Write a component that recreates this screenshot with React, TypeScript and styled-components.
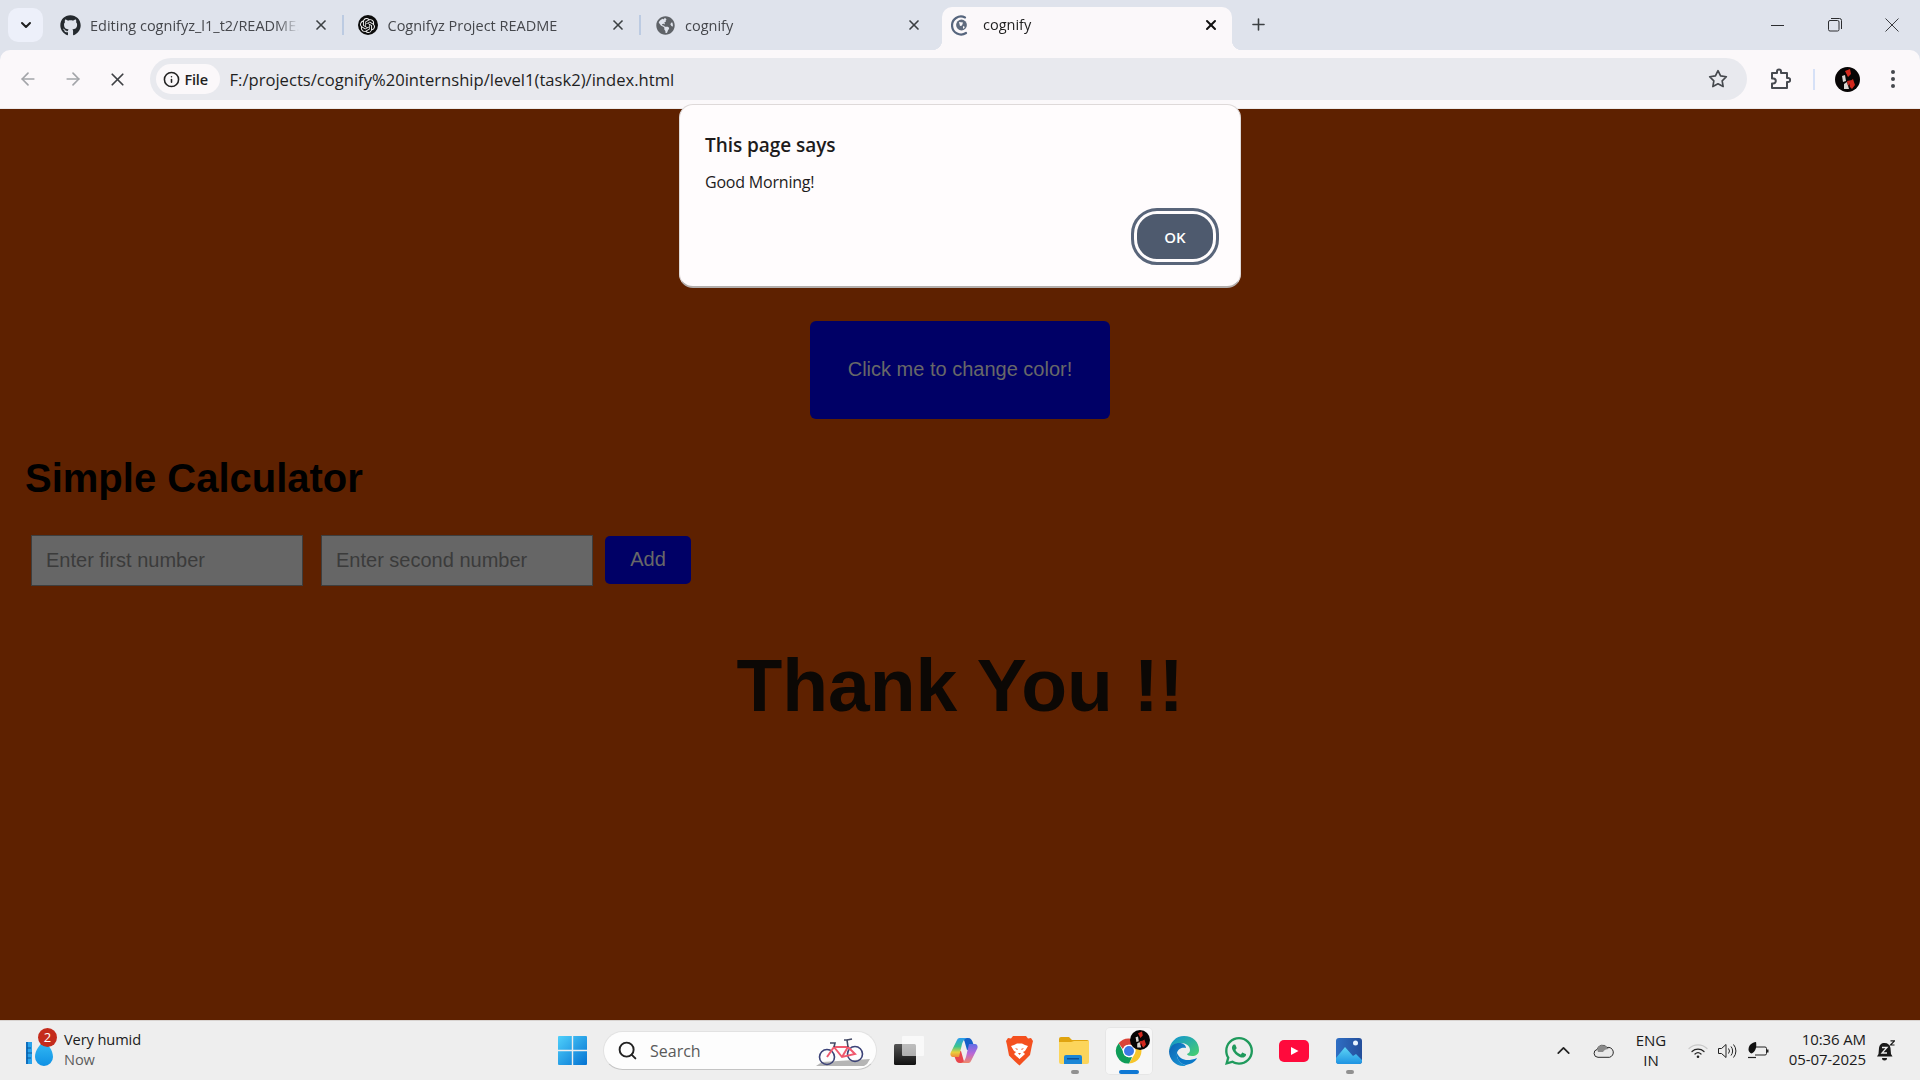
import styled, { createGlobalStyle } from "styled-components";
import { FaGithub, FaGlobeAmericas, FaWhatsapp } from "react-icons/fa";
import { SiOpenai } from "react-icons/si";
import { FiArrowLeft, FiArrowRight, FiX, FiPlus, FiStar, FiSearch, FiChevronUp, FiChevronDown, FiInfo } from "react-icons/fi";

const GlobalStyle = createGlobalStyle`
  html, body { margin: 0; padding: 0; }
  body { width: 1920px; height: 1080px; overflow: hidden; font-family: "Open Sans", "Noto Sans", sans-serif; }
`;

const Avatar = ({ size }: { size: number }) => (
  <svg width={size} height={size} viewBox="0 0 25 25">
    <circle cx="12.5" cy="12.5" r="12.5" fill="#070505" />
    <path d="M10 4l5-2 1 5-3 3zM14 15l4-3 2 6-3 4-2-2z" fill="#d3281d" />
    <path d="M7 9l3-1 1 6-3 1zM9 17l3-2 2 7H9z" fill="#d8d4d0" />
    <path d="M12 14l5-1-4 6z" fill="#c5271f" />
  </svg>
);

const ActiveFavicon = () => (
  <svg width="20" height="22" viewBox="0 0 20 22">
    <path d="M14 3.4A9 9 0 1 0 15 19" fill="none" stroke="#56657d" strokeWidth="2.2" strokeLinecap="round" />
    <circle cx="10.5" cy="11" r="5.4" fill="#5f6b7e" />
    <path d="M8 8l4 .5-1 3-2 .5zM12 12l2 1-2 2z" fill="#fbf8fa" />
  </svg>
);

const ExtensionIcon = () => (
  <svg width="22" height="22" viewBox="0 0 22 22" fill="none" stroke="#474a50" strokeWidth="2" strokeLinejoin="round">
    <path d="M3 5h5V3.5a2 2 0 0 1 4 0V5h6v5h1.2a2 2 0 0 1 0 4H18v6H3v-4.500h1.300a2.500 2.500 0 0 0 0-5H3z" />
  </svg>
);

const RestoreIcon = () => (
  <svg width="14" height="14" viewBox="0 0 14 14" fill="none" stroke="#2c2d30" strokeWidth="1">
    <rect x="0.500" y="2.500" width="10.500" height="10.500" rx="1.500" />
    <path d="M3 .5h8.500a2 2 0 0 1 2 2V11" />
  </svg>
);

const CloseLines = () => (
  <svg width="14" height="14" viewBox="0 0 14 14" stroke="#3b3c40" strokeWidth="1">
    <path d="M.5.5l13 13M13.500.5l-13 13" />
  </svg>
);

const WeatherIcon = () => (
  <svg width="30" height="28" viewBox="0 0 30 28">
    <defs>
      <linearGradient id="drop" x1="0" y1="0" x2="0" y2="1">
        <stop offset="0" stopColor="#37bdf5" />
        <stop offset="1" stopColor="#0f91e4" />
      </linearGradient>
    </defs>
    <rect x="1" y="4" width="6" height="22" fill="#2aa3ec" />
    <rect x="1" y="4" width="2" height="22" fill="#0f6fbe" />
    <path d="M2 10h4M2 15h5M2 20h4" stroke="#0b5a9a" strokeWidth="1" />
    <path d="M19 2c4 5 9 10 9 17a9 9 0 0 1-18 0c0-7 5-12 9-17z" fill="url(#drop)" />
  </svg>
);

const WindowsLogo = () => (
  <svg width="29" height="29" viewBox="0 0 29 29">
    <defs>
      <linearGradient id="win" x1="0" y1="0" x2="1" y2="1">
        <stop offset="0" stopColor="#4fd0fb" />
        <stop offset="1" stopColor="#0372d2" />
      </linearGradient>
    </defs>
    <path d="M1 0h12.800v13.800H0V1a1 1 0 0 1 1-1zM15.200 0H28a1 1 0 0 1 1 1v12.800H15.200zM0 15.200h13.800V29H1a1 1 0 0 1-1-1zM15.200 15.200H29V28a1 1 0 0 1-1 1H15.200z" fill="url(#win)" />
  </svg>
);

const Bike = () => (
  <svg width="56" height="32" viewBox="0 0 56 32">
    <path d="M0 31l6-4 48-3-3 5-3 2z" fill="#b5b5b5" />
    <g fill="none" strokeWidth="1.600">
      <circle cx="11" cy="22" r="7.500" stroke="#3c4378" />
      <circle cx="39" cy="19" r="7.500" stroke="#3c4378" />
      <path d="M11 22l7-10h14l7 7-13 3-8-10M32 12l-6 10" stroke="#f0596e" strokeWidth="2" />
      <path d="M32 12l-1-7h-3M14 8h5l-1 4" stroke="#444a66" />
      <path d="M31 5l5-1" stroke="#444a66" />
    </g>
  </svg>
);

const TaskViewIcon = () => (
  <svg width="30" height="29" viewBox="0 0 30 29">
    <defs>
      <linearGradient id="tv" x1="0" y1="0" x2="0" y2="1">
        <stop offset="0" stopColor="#555" />
        <stop offset="1" stopColor="#111" />
      </linearGradient>
    </defs>
    <rect x="0" y="8" width="22" height="21" rx="1.500" fill="url(#tv)" />
    <rect x="8" y="0" width="22" height="20" rx="1" fill="#fff" fillOpacity=".62" />
  </svg>
);

const CopilotIcon = () => (
  <svg width="28" height="27" viewBox="0 0 28 27">
    <defs>
      <linearGradient id="copL" x1="0" y1="0" x2="0" y2="1">
        <stop offset="0" stopColor="#2a9bf0" />
        <stop offset=".45" stopColor="#3cc58a" />
        <stop offset=".75" stopColor="#e9cf3c" />
        <stop offset="1" stopColor="#f08a3a" />
      </linearGradient>
      <linearGradient id="copR" x1="0" y1="1" x2="0" y2="0">
        <stop offset="0" stopColor="#5f6ee6" />
        <stop offset=".5" stopColor="#b867d8" />
        <stop offset="1" stopColor="#f0886a" />
      </linearGradient>
    </defs>
    <path d="M15 1h3c3 0 4 2 5 5l2 6-8 1-2-7c-.5-2-1-4-3-5z" fill="#1560c8" />
    <path d="M13 26h-3c-3 0-4-2-5-5l-2-6 8-1 2 7c.5 2 1 4 3 5z" fill="#e8464c" />
    <path d="M7 3c1-2 2-2 4-2h6c-3 1-4 3-5 6L9 20H3c-2 0-3-2-2.500-4z" fill="url(#copL)" />
    <path d="M7 3c1-2 2-2 4-2h6c-3 1-4 3-5 6L9 20H3c-2 0-3-2-2.500-4z" fill="url(#copR)" transform="rotate(180 14 13.500)" />
  </svg>
);

const BraveIcon = () => (
  <svg width="27" height="30" viewBox="0 0 27 30">
    <path d="M7 0h13l2 2.500 3-.5 2 3-1 4-2 10-6 6-4.500 4.500L9 25.500l-6-6L1 9 0 5l2-3 3 .5z" fill="#f4501f" />
    <path d="M8 9l3-1.500h5L19 9l3 1-3 5-2 1 2 2-5.500 5L8 18l2-2-2-1-3-5z" fill="#fff" />
    <path d="M9 12l3 1-1 1zM18 12l-3 1 1 1zM12 17h3l-1.500 2z" fill="#f4501f" />
  </svg>
);

const FolderIcon = () => (
  <svg width="30" height="27" viewBox="0 0 30 27">
    <path d="M0 2a2 2 0 0 1 2-2h8l3 3h15a2 2 0 0 1 2 2v3H0z" fill="#e0a40f" />
    <path d="M0 5h12l3-1h15v21a2 2 0 0 1-2 2H2a2 2 0 0 1-2-2z" fill="#fcd55b" />
    <path d="M5 27v-7a2 2 0 0 1 2-2h14a2 2 0 0 1 2 2v7z" fill="#1b86d6" />
    <rect x="8" y="21" width="12" height="1.500" fill="#0b4f96" />
  </svg>
);

const ChromeIcon = () => (
  <svg width="30" height="30" viewBox="0 0 48 48">
    <path d="M24 4a20 20 0 0 1 17.300 10H24a10 10 0 0 0-9.500 7L7.500 11.500A20 20 0 0 1 24 4z" fill="#db4437" />
    <path d="M41.300 14A20 20 0 0 1 24 44l8.700-15A10 10 0 0 0 32 17z" fill="#f7c52b" />
    <path d="M7.500 11.500L16 27a10 10 0 0 0 13 6.500L24 44A20 20 0 0 1 7.500 11.500z" fill="#0f9d58" />
    <circle cx="24" cy="24" r="10" fill="#fff" />
    <circle cx="24" cy="24" r="8" fill="#3c79e6" />
  </svg>
);

const EdgeIcon = () => (
  <svg width="30" height="30" viewBox="0 0 30 30">
    <defs>
      <linearGradient id="edgeA" x1="0" y1="0" x2="1" y2="1">
        <stop offset="0" stopColor="#0d8fd8" />
        <stop offset="1" stopColor="#49d26a" />
      </linearGradient>
      <linearGradient id="edgeB" x1="0" y1="0" x2="1" y2="1">
        <stop offset="0" stopColor="#0b61b4" />
        <stop offset="1" stopColor="#1a9ad6" />
      </linearGradient>
    </defs>
    <path d="M15 0c9 0 15 6 15 14 0 4-3 6-7 6-3 0-5-1-5-2 2-1 3-2 3-4 0-4-4-7-9-7-5 0-9 3-12 8C1 6 7 0 15 0z" fill="url(#edgeA)" />
    <path d="M0 15c2-6 6-8 10-8 4 0 7 2 7 5-3-1-8 0-9 5-1 5 3 11 9 12-1 1-2 1-3 1C6 30 0 23 0 15z" fill="url(#edgeB)" />
    <path d="M17 29c-6-1-10-7-9-12 3 7 10 9 20 5-2 4-6 6-11 7z" fill="#0a79c8" />
  </svg>
);

const YoutubeIcon = () => (
  <svg width="30" height="22" viewBox="0 0 30 22">
    <rect width="30" height="22" rx="5" fill="#ff0a3c" />
    <path d="M12 7l7.500 4-7.500 4z" fill="#fff" />
  </svg>
);

const PhotosIcon = () => (
  <svg width="26" height="26" viewBox="0 0 26 26">
    <defs>
      <linearGradient id="phA" x1="0" y1="0" x2="1" y2="0">
        <stop offset="0" stopColor="#2f6fc4" />
        <stop offset="1" stopColor="#244e9a" />
      </linearGradient>
      <linearGradient id="phB" x1="0" y1="0" x2="0" y2="1">
        <stop offset="0" stopColor="#5fd6f5" />
        <stop offset="1" stopColor="#1e93e2" />
      </linearGradient>
    </defs>
    <rect width="26" height="26" rx="3" fill="url(#phA)" />
    <circle cx="19.500" cy="5" r="2.500" fill="#e8f4ff" />
    <path d="M0 20L9 9l8 9 3-2 6 6v1a3 3 0 0 1-3 3H3a3 3 0 0 1-3-3z" fill="url(#phB)" />
  </svg>
);

const CloudIcon = () => (
  <svg width="21" height="14" viewBox="0 0 21 14">
    <path d="M5 13.300a4 4 0 0 1-.8-7.900A5.500 5.500 0 0 1 14 3.500a4.800 4.800 0 0 1 2.500 9.800z" fill="#e9e9e9" stroke="#2a2a2a" />
    <path d="M4.200 5.400A5.500 5.500 0 0 1 14 3.500l2 1.500c-3 0-5 1-6 3H5z" fill="#8a8a8a" />
  </svg>
);

const WifiIcon = () => (
  <svg width="20" height="16" viewBox="0 0 20 16" fill="none" strokeLinecap="round">
    <path d="M1 5.500a13 13 0 0 1 18 0" stroke="#c9c9c9" strokeWidth="1.200" />
    <path d="M4 8.500a9 9 0 0 1 12 0" stroke="#222" strokeWidth="1.200" />
    <path d="M7 11a4.500 4.500 0 0 1 6 0" stroke="#222" strokeWidth="1.200" />
    <circle cx="10" cy="13.800" r="1.300" fill="#222" />
  </svg>
);

const VolumeIcon = () => (
  <svg width="20" height="16" viewBox="0 0 20 16" fill="none" stroke="#222" strokeWidth="1">
    <path d="M.5 5.500h3L8 1.500v13l-4.500-4h-3z" strokeLinejoin="round" />
    <path d="M10.500 5.500a4 4 0 0 1 0 5M13 3.500a7 7 0 0 1 0 9M15.500 1.500a10 10 0 0 1 0 13" />
  </svg>
);

const BatteryIcon = () => (
  <svg width="21" height="18" viewBox="0 0 21 18">
    <path d="M8 5h9a1.500 1.500 0 0 1 1.500 1.500v5A1.500 1.500 0 0 1 17 13H7" fill="none" stroke="#222" strokeWidth="1" />
    <rect x="18.500" y="7.500" width="2" height="3" fill="#222" />
    <path d="M8 0C4 .5 .5 3 .5 7.500c0 2 1.500 3.500 3 4C7.500 10 9 5 8 0z" fill="#111" />
    <path d="M0 15.500h8" stroke="#222" strokeWidth="1.200" />
  </svg>
);

const BellIcon = () => (
  <svg width="19" height="21" viewBox="0 0 19 21">
    <path d="M8.500 3C12 3 14 5 14.500 8l.5 6 1.500 2.500H1L2.500 14 3 8C3.500 5 5 3 8.500 3z" fill="#1a1a1a" />
    <path d="M6 18h5a2.500 2.500 0 0 1-5 0z" fill="#1a1a1a" />
    <path d="M6 7.500h5L6 13h5" fill="none" stroke="#eee" strokeWidth="1.300" />
    <path d="M14.500.8H18.500L14.500 5H18.500" fill="none" stroke="#1a1a1a" strokeWidth="1.200" />
  </svg>
);

export default function App() {
  const tabs = [
    { title: "Editing cognifyz_l1_t2/README.md", icon: <FaGithub size={21} color="#24292e" /> },
    {
      title: "Cognifyz Project README",
      icon: (
        <OpenAiChip>
          <SiOpenai size={15} color="#f4f4f4" />
        </OpenAiChip>
      ),
    },
    { title: "cognify", icon: <FaGlobeAmericas size={19} color="#5f6368" /> },
  ];

  return (
    <Screen>
      <GlobalStyle />
      <TabStrip>
        <TabSearch>
          <FiChevronDown size={16} strokeWidth={3} color="#1f1f1f" />
        </TabSearch>
        {tabs.map((tab) => (
          <Tab key={tab.title}>
            <FaviconSlot>{tab.icon}</FaviconSlot>
            <TabTitle>{tab.title}</TabTitle>
            <TabClose>
              <FiX size={16} strokeWidth={2.5} color="#3c4043" />
            </TabClose>
            <TabDivider />
          </Tab>
        ))}
        <ActiveTab>
          <FaviconSlot>
            <ActiveFavicon />
          </FaviconSlot>
          <TabTitle $active>cognify</TabTitle>
          <TabClose>
            <FiX size={16} strokeWidth={3} color="#111" />
          </TabClose>
        </ActiveTab>
        <NewTab>
          <FiPlus size={19} strokeWidth={2} color="#3c4043" />
        </NewTab>
        <WindowControls>
          <WindowButton>
            <MinimizeLine />
          </WindowButton>
          <WindowButton>
            <RestoreIcon />
          </WindowButton>
          <WindowButton>
            <CloseLines />
          </WindowButton>
        </WindowControls>
      </TabStrip>

      <Toolbar>
        <NavButton>
          <FiArrowLeft size={20} color="#a3a5a9" />
        </NavButton>
        <NavButton>
          <FiArrowRight size={20} color="#a3a5a9" />
        </NavButton>
        <NavButton>
          <FiX size={21} strokeWidth={2} color="#3f4145" />
        </NavButton>
        <Omnibox>
          <FileChip>
            <FiInfo size={17} strokeWidth={2.2} color="#222" />
            <span>File</span>
          </FileChip>
          <UrlText>F:/projects/cognify%20internship/level1(task2)/index.html</UrlText>
          <FiStar size={20} strokeWidth={2} color="#45484d" />
        </Omnibox>
        <ExtensionSlot>
          <ExtensionIcon />
        </ExtensionSlot>
        <ToolbarDivider />
        <ProfileSlot>
          <Avatar size={25} />
        </ProfileSlot>
        <MenuDots>
          <i />
          <i />
          <i />
        </MenuDots>
      </Toolbar>

      <Page>
        <AlertBox>
          <AlertTitle>This page says</AlertTitle>
          <AlertMessage>Good Morning!</AlertMessage>
          <AlertFooter>
            <OkButton>OK</OkButton>
          </AlertFooter>
        </AlertBox>

        <ColorButton>Click me to change color!</ColorButton>
        <CalcHeading>Simple Calculator</CalcHeading>
        <CalcRow>
          <InputGroup>
            <NumberInput placeholder="Enter first number" />
            <NumberInput placeholder="Enter second number" />
          </InputGroup>
          <AddButton>Add</AddButton>
        </CalcRow>
        <ThankYou>Thank You !!</ThankYou>
      </Page>

      <Taskbar>
        <Weather>
          <WeatherIconWrap>
            <WeatherIcon />
            <Badge>2</Badge>
          </WeatherIconWrap>
          <WeatherText>
            <strong>Very humid</strong>
            <span>Now</span>
          </WeatherText>
        </Weather>

        <TaskCell>
          <WindowsLogo />
        </TaskCell>
        <SearchBox>
          <FiSearch size={21} strokeWidth={2.2} color="#222" />
          <SearchLabel>Search</SearchLabel>
          <Bike />
        </SearchBox>
        <TaskCell>
          <TaskViewIcon />
        </TaskCell>
        <TaskCell>
          <CopilotIcon />
        </TaskCell>
        <TaskCell>
          <BraveIcon />
        </TaskCell>
        <TaskCell $running>
          <FolderIcon />
        </TaskCell>
        <TaskCell $active>
          <ChromeIcon />
          <ChromeBadge>
            <Avatar size={20} />
          </ChromeBadge>
        </TaskCell>
        <TaskCell>
          <EdgeIcon />
        </TaskCell>
        <TaskCell>
          <FaWhatsapp size={32} color="#1f9a5c" />
        </TaskCell>
        <TaskCell>
          <YoutubeIcon />
        </TaskCell>
        <TaskCell $running>
          <PhotosIcon />
        </TaskCell>

        <Tray>
          <TrayCell $width={40}>
            <FiChevronUp size={21} strokeWidth={2} color="#222" />
          </TrayCell>
          <TrayCell $width={40}>
            <CloudIcon />
          </TrayCell>
          <TrayLang>
            <span>ENG</span>
            <span>IN</span>
          </TrayLang>
          <TrayCell $width={38}>
            <WifiIcon />
          </TrayCell>
          <TrayCell $width={22}>
            <VolumeIcon />
          </TrayCell>
          <TrayCell $width={38}>
            <BatteryIcon />
          </TrayCell>
          <Clock>
            <span>10:36 AM</span>
            <span>05-07-2025</span>
          </Clock>
          <TrayCell $width={38}>
            <BellIcon />
          </TrayCell>
        </Tray>
      </Taskbar>
    </Screen>
  );
}

const Screen = styled.div`
  width: 1920px;
  height: 1080px;
  display: flex;
  flex-direction: column;
  background: #dfe3ec;
`;

const TabStrip = styled.div`
  height: 50px;
  display: flex;
  align-items: flex-start;
  padding-left: 8px;
  box-sizing: border-box;
  background: #dfe3ec;
`;

const TabSearch = styled.div`
  width: 35px;
  height: 34px;
  margin: 8px 3px 0 0;
  border-radius: 10px;
  background: #edf0fa;
  display: flex;
  align-items: center;
  justify-content: center;
`;

const Tab = styled.div`
  position: relative;
  width: 297.5px;
  height: 34px;
  margin-top: 8px;
  padding: 0 13px;
  box-sizing: border-box;
  display: flex;
  align-items: center;
  &:nth-of-type(4) {
    width: 301px;
    padding-right: 18px;
    & > :last-child {
      display: none;
    }
  }
`;

const ActiveTab = styled(Tab)`
  width: 290px;
  height: 43px;
  margin-top: 7px;
  padding: 0 11px 8px 8px;
  background: #fbf8fa;
  border-radius: 10px 10px 0 0;
  ${() => FaviconSlot} {
    margin-right: 11px;
  }
  &::before,
  &::after {
    content: "";
    position: absolute;
    bottom: 0;
    width: 10px;
    height: 10px;
  }
  &::before {
    left: -10px;
    background: radial-gradient(circle at 0 0, transparent 10px, #fbf8fa 10.5px);
  }
  &::after {
    right: -10px;
    background: radial-gradient(circle at 100% 0, transparent 10px, #fbf8fa 10.5px);
  }
`;

const OpenAiChip = styled.div`
  width: 20px;
  height: 20px;
  border-radius: 50%;
  background: #0c0c0c;
  display: flex;
  align-items: center;
  justify-content: center;
`;

const FaviconSlot = styled.div`
  width: 22px;
  height: 22px;
  margin-right: 9px;
  flex: none;
  display: flex;
  align-items: center;
  justify-content: center;
`;

const TabTitle = styled.div<{ $active?: boolean }>`
  flex: 1;
  min-width: 0;
  font-size: 14.5px;
  white-space: nowrap;
  overflow: hidden;
  -webkit-mask-image: linear-gradient(to right, #000 calc(100% - 22px), transparent);
  mask-image: linear-gradient(to right, #000 calc(100% - 22px), transparent);
  color: ${(p) => (p.$active ? "#1f1f1f" : "#45474c")};
`;

const TabClose = styled.div`
  width: 20px;
  height: 20px;
  margin-left: 12px;
  flex: none;
  display: flex;
  align-items: center;
  justify-content: center;
`;

const TabDivider = styled.div`
  position: absolute;
  right: 0;
  top: 7px;
  width: 2px;
  height: 20px;
  background: #bccbe2;
`;

const NewTab = styled.div`
  width: 24px;
  height: 24px;
  margin: 12px 0 0 14px;
  display: flex;
  align-items: center;
  justify-content: center;
`;

const WindowControls = styled.div`
  margin-left: auto;
  display: flex;
`;

const WindowButton = styled.div`
  width: 57px;
  height: 50px;
  display: flex;
  align-items: center;
  justify-content: center;
`;

const MinimizeLine = styled.div`
  width: 13px;
  height: 1px;
  background: #2c2d30;
`;

const Toolbar = styled.div`
  height: 59px;
  box-sizing: border-box;
  display: flex;
  align-items: center;
  padding: 0 0 0 6px;
  background: #fbf8fa;
  border-bottom: 1px solid #ebe9ea;
  border-radius: 10px 10px 0 0;
`;

const NavButton = styled.div`
  width: 44.5px;
  display: flex;
  justify-content: center;
`;

const Omnibox = styled.div`
  width: 1597px;
  height: 42px;
  margin-left: 10px;
  padding: 0 19px 0 6px;
  box-sizing: border-box;
  border-radius: 21px;
  background: #e8e9ee;
  display: flex;
  align-items: center;
`;

const FileChip = styled.div`
  width: 64px;
  height: 30px;
  padding-left: 7px;
  box-sizing: border-box;
  border-radius: 15px;
  background: #fbf8fa;
  display: flex;
  align-items: center;
  gap: 5px;
  font-size: 14.5px;
  font-weight: 600;
  letter-spacing: -0.2px;
  color: #1f1f1f;
`;

const UrlText = styled.div`
  flex: 1;
  margin-left: 10px;
  font-size: 16.6px;
  color: #1f1f1f;
`;

const ExtensionSlot = styled.div`
  width: 66px;
  display: flex;
  justify-content: center;
`;

const ToolbarDivider = styled.div`
  width: 2px;
  height: 21px;
  background: #d6e1f7;
`;

const ProfileSlot = styled.div`
  width: 66px;
  display: flex;
  justify-content: center;
`;

const MenuDots = styled.div`
  width: 24px;
  display: flex;
  flex-direction: column;
  align-items: center;
  gap: 3px;
  i {
    width: 4px;
    height: 4px;
    border-radius: 50%;
    background: #45484d;
  }
`;

const Page = styled.main`
  position: relative;
  flex: 1;
  background: #5e2100;
  font-family: "Liberation Sans", Arial, sans-serif;
  color: #000;
`;

const AlertBox = styled.div`
  position: absolute;
  top: -5px;
  left: 679px;
  width: 562px;
  height: 184px;
  box-sizing: border-box;
  padding: 26px 21px 0 25px;
  background: #fffcfd;
  border-radius: 14px;
  border: 1px solid #ded9d9;
  border-bottom: 2px solid #b3aeac;
  font-family: "Open Sans", "Noto Sans", sans-serif;
`;

const AlertTitle = styled.div`
  font-size: 19px;
  line-height: 28px;
  font-weight: 600;
  letter-spacing: -0.05px;
  color: #1d1b1c;
`;

const AlertMessage = styled.div`
  margin-top: 12px;
  font-size: 16px;
  line-height: 22px;
  letter-spacing: -0.2px;
  color: #1d1b1c;
`;

const AlertFooter = styled.div`
  display: flex;
  justify-content: flex-end;
  margin-top: 15px;
`;

const OkButton = styled.div`
  width: 76px;
  height: 45px;
  border-radius: 23px;
  background: #4e5a6e;
  border: 3px solid #fffcfd;
  outline: 3px solid #59657a;
  color: #fff;
  font-size: 15px;
  font-weight: 600;
  display: flex;
  align-items: center;
  justify-content: center;
  margin: 3px;
`;

const ColorButton = styled.div`
  width: 300px;
  height: 98px;
  padding-bottom: 2px;
  box-sizing: border-box;
  margin: 212px auto 0;
  border-radius: 6px;
  background: #000066;
  color: #686868;
  font-size: 20px;
  display: flex;
  align-items: center;
  justify-content: center;
`;

const CalcHeading = styled.h2`
  margin: 36px 0 0 25px;
  font-size: 40px;
  line-height: 46px;
  font-weight: 700;
  color: #000;
`;

const CalcRow = styled.div`
  display: flex;
  align-items: center;
  gap: 12px;
  margin: 34px 0 0 31px;
`;

const InputGroup = styled.div`
  display: flex;
  gap: 18px;
`;

const NumberInput = styled.input`
  width: 272px;
  height: 51px;
  box-sizing: border-box;
  padding: 0 14px;
  border: 1px solid #3e3e3e;
  border-radius: 0;
  background: #666666;
  font-family: "Liberation Sans", Arial, sans-serif;
  font-size: 20px;
  outline: none;
  &::placeholder {
    color: #3b3b3b;
    opacity: 1;
  }
`;

const AddButton = styled.div`
  width: 86px;
  height: 48px;
  margin-bottom: 2px;
  border-radius: 5px;
  background: #000066;
  color: #686868;
  font-size: 20px;
  display: flex;
  align-items: center;
  justify-content: center;
`;

const ThankYou = styled.h1`
  margin: 57px 0 0;
  text-align: center;
  font-size: 75px;
  line-height: 84px;
  font-weight: 700;
  color: #0c0805;
`;

const Taskbar = styled.footer`
  height: 60px;
  box-sizing: border-box;
  display: flex;
  align-items: center;
  background: #eeeeee;
  border-top: 1px solid #d8d3d0;
`;

const Weather = styled.div`
  width: 545px;
  padding-left: 25px;
  box-sizing: border-box;
  display: flex;
  align-items: center;
  gap: 9px;
`;

const WeatherIconWrap = styled.div`
  position: relative;
  display: flex;
  margin-top: 2px;
`;

const Badge = styled.div`
  position: absolute;
  top: -10px;
  left: 13px;
  width: 19px;
  height: 19px;
  border-radius: 50%;
  background: #c42b1c;
  color: #fff;
  font-size: 13px;
  display: flex;
  align-items: center;
  justify-content: center;
`;

const WeatherText = styled.div`
  display: flex;
  flex-direction: column;
  margin-top: -4px;
  font-size: 14.6px;
  line-height: 20px;
  letter-spacing: -0.1px;
  strong {
    font-weight: 400;
    color: #1b1b1b;
  }
  span {
    color: #5d5d5d;
  }
`;

const TaskCell = styled.div<{ $active?: boolean; $running?: boolean }>`
  position: relative;
  width: 55px;
  height: 48px;
  display: flex;
  align-items: center;
  justify-content: center;
  border-radius: 5px;
  box-sizing: border-box;
  ${(p) =>
    p.$active &&
    `
    background: #f7f7f7;
    box-shadow: inset 0 0 0 1px #e6e6e6;
    width: 48px;
    margin: 0 3.5px;
    &::after {
      content: "";
      position: absolute;
      bottom: 1px;
      left: 14px;
      width: 20px;
      height: 4px;
      border-radius: 2px;
      background: #0f78d4;
    }
  `}
  ${(p) =>
    p.$running &&
    `
    &::after {
      content: "";
      position: absolute;
      bottom: 1px;
      left: 24px;
      width: 8px;
      height: 4px;
      border-radius: 2px;
      background: #909090;
    }
  `}
`;

const ChromeBadge = styled.div`
  position: absolute;
  top: 3px;
  right: 3px;
  display: flex;
`;

const SearchBox = styled.div`
  width: 274px;
  height: 39px;
  margin: 0 4.5px 0 3px;
  padding: 0 4px 0 13px;
  box-sizing: border-box;
  border-radius: 20px;
  background: #fdfdfd;
  border: 1px solid #e2e2e2;
  border-bottom-color: #c4c4c4;
  display: flex;
  align-items: center;
`;

const SearchLabel = styled.div`
  flex: 1;
  margin-left: 12px;
  font-size: 16px;
  color: #5a5a5a;
`;

const Tray = styled.div`
  margin-left: auto;
  padding-right: 16px;
  display: flex;
  align-items: center;
`;

const TrayCell = styled.div<{ $width: number }>`
  width: ${(p) => p.$width}px;
  display: flex;
  justify-content: center;
  align-items: center;
`;

const TrayLang = styled.div`
  width: 56px;
  margin-top: -2px;
  display: flex;
  flex-direction: column;
  align-items: center;
  font-size: 15px;
  line-height: 20px;
  color: #1b1b1b;
`;

const Clock = styled.div`
  width: 89px;
  margin-top: -3px;
  display: flex;
  flex-direction: column;
  align-items: flex-end;
  font-size: 15px;
  line-height: 20px;
  letter-spacing: -0.1px;
  color: #1b1b1b;
  white-space: nowrap;
`;
